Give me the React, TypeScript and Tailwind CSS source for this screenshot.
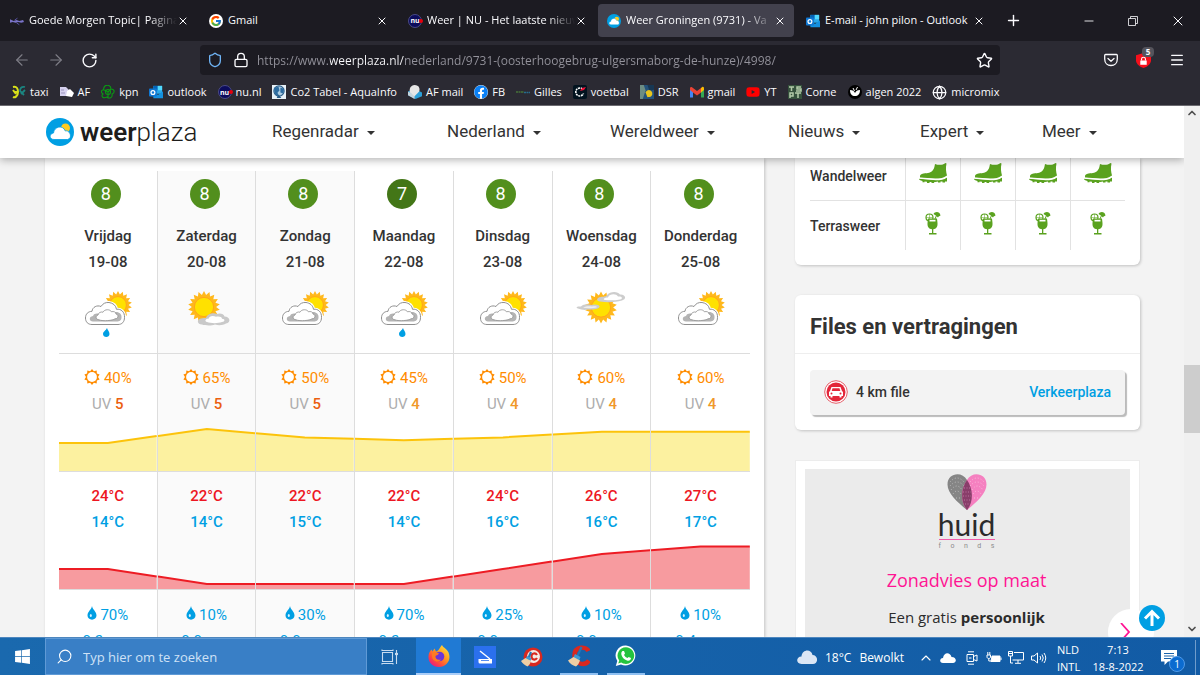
import React from 'react';
import { ArrowLeft, ArrowRight, ChevronDown, ChevronUp, Globe, Lock, Menu, Minus, Plus, RotateCw, Search, Shield, Star, X } from 'lucide-react';
import { FcGoogle } from 'react-icons/fc';
import { FaFacebook, FaWindows, FaYoutube } from 'react-icons/fa';

type Weather = 'cloudy' | 'rain' | 'sunny' | 'veiled';

interface Day {
  name: string;
  date: string;
  score: number;
  weather: Weather;
  sun: number;
  uv: number;
  max: number;
  min: number;
  rain: number;
  amount: string;
}

const DAYS: Day[] = [
  { name: 'Vrijdag', date: '19-08', score: 8, weather: 'rain', sun: 40, uv: 5, max: 24, min: 14, rain: 70, amount: '0.2' },
  { name: 'Zaterdag', date: '20-08', score: 8, weather: 'sunny', sun: 65, uv: 5, max: 22, min: 14, rain: 10, amount: '0.0' },
  { name: 'Zondag', date: '21-08', score: 8, weather: 'cloudy', sun: 50, uv: 5, max: 22, min: 15, rain: 30, amount: '0.0' },
  { name: 'Maandag', date: '22-08', score: 7, weather: 'rain', sun: 45, uv: 4, max: 22, min: 14, rain: 70, amount: '0.2' },
  { name: 'Dinsdag', date: '23-08', score: 8, weather: 'cloudy', sun: 50, uv: 4, max: 24, min: 16, rain: 25, amount: '0.0' },
  { name: 'Woensdag', date: '24-08', score: 8, weather: 'veiled', sun: 60, uv: 4, max: 26, min: 16, rain: 10, amount: '0.0' },
  { name: 'Donderdag', date: '25-08', score: 8, weather: 'cloudy', sun: 60, uv: 4, max: 27, min: 17, rain: 10, amount: '0.4' },
];

const NAV = ['Regenradar', 'Nederland', 'Wereldweer', 'Nieuws', 'Expert', 'Meer'];

const CHART_HEIGHT = 54;
const SUN_HEIGHTS = DAYS.map((d) => 28 + (d.sun - 40) * 0.56);
const TEMP_HEIGHTS = DAYS.map((d) => 5 + (d.max - 22) * 7.5);

const rays = (cx: number, cy: number, outer: number, inner: number, count: number) =>
  Array.from({ length: count * 2 }, (_, i) => {
    const r = i % 2 === 0 ? outer : inner;
    const a = (Math.PI * i) / count - Math.PI / 2;
    return `${(cx + r * Math.cos(a)).toFixed(2)},${(cy + r * Math.sin(a)).toFixed(2)}`;
  }).join(' ');

/* ---------- weather drawings ---------- */

const Sun: React.FC<{ cx: number; cy: number; r: number }> = ({ cx, cy, r }) => (
  <>
    <polygon points={rays(cx, cy, r, r * 0.76, 18)} fill="#ffb81c" />
    <circle cx={cx} cy={cy} r={r * 0.6} fill="#ffe100" stroke="#ff9d1c" strokeWidth="0.8" />
  </>
);

const WeatherIcon: React.FC<{ kind: Weather }> = ({ kind }) => (
  <svg viewBox="-2 0 50 46" className="mx-auto block h-[46px] w-[50px]" aria-hidden="true">
    {(kind === 'cloudy' || kind === 'rain') && (
      <>
        <Sun cx={33} cy={14} r={14} />
        <path d="M7 33.5C3 33.5.5 31 .5 27S3 20.5 7 20.3C7.500 16 12 13.800 16 15.500C18 12.300 20.500 11.300 24 11.500C28 12 31 14.500 31.500 18.300C36 17.600 39.800 21 39.500 26.300C39.500 31 37 33.500 33 33.500Z" fill="#fff" stroke="#fff" strokeWidth="3" />
        <path d="M7 33.5C3 33.5.5 31 .5 27S3 20.5 7 20.3C7.500 16 12 13.800 16 15.500C18 12.300 20.500 11.300 24 11.500C28 12 31 14.500 31.500 18.300C36 17.600 39.800 21 39.500 26.300C39.500 31 37 33.500 33 33.500Z" fill="#fff" stroke="#8f8f8f" strokeWidth="1" />
        <path d="M8 30.500C4 30.500 3.500 25.500 8 25C9 22.500 12 22 14 23L30 21C34 20.500 37 23 36.500 26.500C36.500 29.500 34 30.500 32 30.500Z" fill="#b4b4b4" />
        <path d="M14 28.800C10.500 28.500 10.300 24.800 13 24C13.500 21.500 16 20.500 18 21.200C19.500 18 25 18 26.500 20.800C28.500 20 31 21 31 23C34 23.500 33.500 28 30 27.800C28 29.500 18 30.500 14 28.800Z" fill="#fff" stroke="#8f8f8f" strokeWidth="0.8" />
      </>
    )}
    {kind === 'rain' && <path d="M22 37C22.500 39 24.500 40.500 24.500 43C24.500 47 18 47 18 43C18 40.500 21 39.500 22 37Z" fill="#009fe3" />}
    {kind === 'sunny' && (
      <>
        <Sun cx={20} cy={16} r={16} />
        <path d="M18 33.500C13 33.500 12.500 28.500 17 27.500C19 26.500 21 27 22 27C23 23 29 21 33 23C36 21.500 40 23 40.500 25.500C46 25.500 47.500 31.500 42 32.500C39 34.500 34 34.500 31 33.500C27 35 21 34.500 18 33.500Z" fill="#c9c9c9" />
        <path d="M23 31C20.500 30.500 21 27.500 24.500 27.800C25 25 29 24 32 25.800C35 25 38 26 38 27.800C41.500 28 41 30.800 38 31C34 32.500 27 32.500 23 31Z" fill="#fff" />
      </>
    )}
    {kind === 'veiled' && (
      <>
        <Sun cx={23} cy={16.500} r={16} />
        <path d="M22 10.500C18 10.500 18 6.500 23 6C25 5.500 28 6 29 4C32 0 40 0 42 3.500C47 3 49.500 8 44 9.500C38 11 30 12 22 10.500Z" fill="#cdcdcd" />
        <path d="M27 9C24.500 8.500 26 6.500 30 6.500C31 3 38 2 40 5.500C44 5 45.500 7.500 42 8.500C37 9.500 31 9.500 27 9Z" fill="#fff" />
        <path d="M0 17.500C-3 16.500-1 15 3 15.500C5 13 10 12.500 13 14C17 12.500 22.500 14 21.500 16C20 19 12 18.500 10 18.500C6 19.500 3 18.500 0 17.500Z" fill="#cdcdcd" />
        <path d="M5 16.800C8 14.800 12 15 14 15.500C17 15 19 15.500 19 16.200C15 17.500 9 17.500 5 16.800Z" fill="#eee" />
      </>
    )}
  </svg>
);

const SunOutline = () => (
  <svg viewBox="0 0 16 16" className="mb-0.5 size-4 shrink-0" aria-hidden="true">
    <polygon points={rays(8, 8, 8, 6, 10)} fill="#ff8c00" />
    <circle cx="8" cy="8" r="4.900" fill="#fff" />
  </svg>
);

const Drop = () => (
  <svg viewBox="0 0 10 14" className="mb-1 h-3.5 w-2.5 shrink-0" aria-hidden="true">
    <path d="M5 0C5.500 3.500 9.500 5.500 9.500 9.500C9.500 15 .5 15 .5 9.500C.5 5.500 4.500 3.500 5 0Z" fill="#009fe3" />
    <ellipse cx="3.800" cy="9.500" rx="1" ry="1.600" fill="#d9f2ff" />
  </svg>
);

const Boot = () => (
  <svg viewBox="0 0 28 20" className="mx-auto block h-5 w-7" aria-hidden="true">
    <path d="M16 1C20 2.500 24 2 26.500 0L27.500 .5C26.500 5 27 9 28 12.500C24 15.500 20 15.500 16 15.500L1 14.500C.5 12 2 10.800 4.500 10.500C9 10 12 10 14 7C15.500 5 15.500 3 16 1Z" fill="#5aa21f" />
    <path d="M0 15.800L17 17.300C21 17.300 25 17 28 14.500V18.500L26 18.500V19.500H23.500V18.500L21.500 18.500V19.500H19V18.500L15 19.300V20H12.500V19L10.500 19V20H8V18.800L5.500 18.500V19.300H3.500V18C1 17.500 0 16.800 0 15.800Z" fill="#5aa21f" />
    <path d="M.5 15.200L16.500 16.400C21 16.400 25 16 28 13.600" fill="none" stroke="#fff" strokeWidth=".9" />
  </svg>
);

const Cocktail = () => (
  <svg viewBox="0 0 16 24" className="mx-auto block h-6 w-4" aria-hidden="true">
    <circle cx="4.500" cy="6.500" r="3.500" fill="#fff" stroke="#5aa21f" strokeWidth="1.200" />
    <path d="M4.500 3V10M1 6.500H8" stroke="#5aa21f" strokeWidth=".5" />
    <path d="M8.500 3C10 .5 14.500 0 15.500 4.500C14.500 5 13.500 5.500 13 6.500C11.500 5 10 4 8.500 3Z" fill="#5aa21f" />
    <path d="M11.500 4.500L9.500 9" stroke="#5aa21f" strokeWidth="1" />
    <path d="M3 7.500H12L12.500 12C12.800 16 11 18 8.300 18.300V22H11.500V23.500H4V22H7V18.300C4 18 2.300 16 2.500 12Z" fill="#5aa21f" />
    <path d="M4.500 8.800H10.500V10.500H4.500Z" fill="#fff" />
  </svg>
);

/* ---------- small logos ---------- */

const PlazaLogo: React.FC<{ className: string }> = ({ className }) => (
  <svg viewBox="0 0 28 28" className={className} aria-hidden="true">
    <circle cx="14" cy="14" r="14" fill="#009fe3" />
    <circle cx="19.500" cy="10" r="4.500" fill="#ffcb1f" />
    <path d="M8 21.500C3 21.500 3 15.500 7.500 15C8 8.500 17 6.500 19.300 13C24 11.500 27 20.500 21.500 21.500Z" fill="#fff" stroke="#009fe3" strokeWidth=".8" />
  </svg>
);

const icon = 'size-3.5 shrink-0';

const OutlookLogo = () => (
  <svg viewBox="0 0 16 14" className={icon} aria-hidden="true">
    <path d="M5 0H15V9H5Z" fill="#28a8ea" />
    <path d="M5 0H10V5H5Z" fill="#0364b8" />
    <path d="M10 0H15V5H10Z" fill="#50d9ff" />
    <path d="M5 8L10.500 10L16 6V14H5Z" fill="#1490df" />
    <rect y="3" width="9" height="9" rx="1" fill="#0f78d4" />
    <circle cx="4.500" cy="7.500" r="2.200" fill="none" stroke="#fff" strokeWidth="1.400" />
  </svg>
);

const NuLogo = () => (
  <span className="relative flex size-3.5 shrink-0 items-center justify-center rounded-full border border-[#4a4a86] bg-[#0c0c5c] text-[7px] font-bold leading-none text-white">
    nu
    <span className="absolute -right-0.5 top-1 size-1 rounded-full bg-red-600" />
  </span>
);

const Bookmark: React.FC<{ label: string; children: React.ReactNode }> = ({ label, children }) => (
  <a href="#" className="flex items-center gap-1 whitespace-nowrap">
    {children}
    {label}
  </a>
);

const BOOKMARKS: { label: string; icon: React.ReactNode }[] = [
  {
    label: 'taxi',
    icon: (
      <svg viewBox="0 0 14 14" className={icon}>
        <path d="M1 2C5 1 6 4 6 7C6 11 3 13 1 12M2 7H6M1 5L4 9" stroke="#d8e01a" strokeWidth="2" fill="none" />
        <path d="M13 2C9 1 8 4 8 6L12 10M13 5L9 9" stroke="#1b8581" strokeWidth="1.800" fill="none" />
      </svg>
    ),
  },
  {
    label: 'AF',
    icon: (
      <svg viewBox="0 0 14 14" className={icon}>
        <path d="M0 2H6L9 5V11H0Z" fill="#d5d0ee" />
        <path d="M7 6L10 4L14 8L12 12L6 11Z" fill="#fff" />
        <path d="M1 5H4M1 8H5" stroke="#9b95bd" />
      </svg>
    ),
  },
  {
    label: 'kpn',
    icon: (
      <svg viewBox="0 0 14 14" className={icon} fill="none" stroke="#0a9b13" strokeWidth="1.100">
        <path d="M4 1C6-.5 10 0 10 4C14 4 14 8 11 9C12 13 8 14 6 12C2 14-.5 11 2 9C-1 7 1 4 3 5C2 3 3 2 4 1Z" />
        <circle cx="7" cy="7" r="2.500" />
        <path d="M4 5L7 7L10 4M7 7V12" />
      </svg>
    ),
  },
  { label: 'outlook', icon: <OutlookLogo /> },
  { label: 'nu.nl', icon: <NuLogo /> },
  {
    label: 'Co2 Tabel - AquaInfo',
    icon: (
      <svg viewBox="0 0 15 15" className={icon}>
        <path d="M0 0H15V15H0Z" fill="#e8f1f7" />
        <circle cx="7.500" cy="6.500" r="5.500" fill="#a9cbe2" stroke="#285b87" strokeWidth="1.200" />
        <path d="M2 3L7 2L8 6L6 8L7 13L3 9ZM9 3L13 4L12 9L9 8Z" fill="#2d6ca0" />
        <path d="M5 14L7 10L10 14Z" fill="#285b87" />
      </svg>
    ),
  },
  {
    label: 'AF mail',
    icon: (
      <svg viewBox="0 0 15 15" className={icon}>
        <path d="M0 7L7 4L15 8V12L8 15L0 11Z" fill="#2c9fd8" />
        <path d="M0 7L7 11V15L0 11Z" fill="#c7d5dd" />
        <path d="M7 0C12 0 13 4 12 7L7 12L2 8C1 4 3 0 7 0Z" fill="#e6e6e6" />
      </svg>
    ),
  },
  { label: 'FB', icon: <FaFacebook className="size-3.5 shrink-0 rounded-full bg-white text-[#0a80f5]" /> },
  {
    label: 'Gilles',
    icon: (
      <svg viewBox="0 0 14 14" className={icon}>
        <path d="M0 7H8" stroke="#47733a" strokeWidth="1.500" strokeDasharray="2 .5" />
        <path d="M8 7.500H14" stroke="#276c8c" strokeWidth="1.500" strokeDasharray="2 .5" />
      </svg>
    ),
  },
  {
    label: 'voetbal',
    icon: (
      <svg viewBox="0 0 14 14" className={icon}>
        <rect width="14" height="14" rx="2" fill="#02131f" />
        <path d="M9.500 4A4 4 0 1 0 10.500 8.500" fill="none" stroke="#fff" strokeWidth="1.600" strokeDasharray="2 .7" />
        <path d="M7 6L9 3L13 2L11 5Z" fill="#f01438" />
      </svg>
    ),
  },
  {
    label: 'DSR',
    icon: (
      <svg viewBox="0 0 15 15" className={icon}>
        <path d="M0 0H15V15H0Z" fill="#24527a" />
        <path d="M0 0H4L6 6L3 15H0Z" fill="#6c8d83" />
        <path d="M8 0H15V5L10 6Z" fill="#173753" />
        <path d="M6 8C8 4 12 5 13 8C14 12 11 13 8 13Z" fill="#e8c51d" />
      </svg>
    ),
  },
  {
    label: 'gmail',
    icon: (
      <svg viewBox="0 0 14 11" className={icon}>
        <path d="M0 2V11H3V4.500Z" fill="#4285f4" />
        <path d="M14 2V11H11V4.500Z" fill="#34a853" />
        <path d="M11 1.500L12.500 .3C13.500 0 14 .8 14 2V3.500L11 6Z" fill="#fbbc04" />
        <path d="M0 3.500V2C0 .5 1 0 2 .8L7 4.500L11 1.500V6L7 9L3 6Z" fill="#ea4335" />
      </svg>
    ),
  },
  { label: 'YT', icon: <FaYoutube className="size-3.5 shrink-0 text-[#ff0000]" /> },
  {
    label: 'Corne',
    icon: (
      <svg viewBox="0 0 14 14" className={icon}>
        <path d="M0 0H14V14H0Z" fill="#35513c" />
        <path d="M1 2H6M3.500 2V6M13 2H9V4H13V6H8M2 13V8H5V11H2M7 8H13M10 8V13" stroke="#b4cba9" strokeWidth="1.500" fill="none" />
      </svg>
    ),
  },
  {
    label: 'algen 2022',
    icon: (
      <svg viewBox="0 0 14 14" className={icon}>
        <circle cx="7" cy="7" r="7" fill="#000" />
        <path d="M2 5C5 5 6 6 7 8C8 6 9 5 12 5C12 9 10 11 7 11C4 11 2 9 2 5Z" fill="#fff" />
        <path d="M5 3L6.500 6M9.500 2L8 5" stroke="#fff" />
      </svg>
    ),
  },
  { label: 'micromix', icon: <Globe size={15} strokeWidth={2} className="shrink-0" /> },
];

const TABS: { title: string; icon: React.ReactNode; active?: boolean; long?: boolean }[] = [
  {
    title: 'Goede Morgen Topic| Pagina',
    long: true,
    icon: (
      <svg viewBox="0 0 15 14" className={icon}>
        <path d="M0 5L4 7L7 6L10 7L14 6L15 8L12 9L9 8L6 9L3 8L0 9Z" fill="#7973c8" />
        <path d="M5 6L8 4M7 9L10 11" stroke="#5b55a8" />
      </svg>
    ),
  },
  { title: 'Gmail', icon: <FcGoogle className="size-3.5 shrink-0 rounded-full bg-white p-px" /> },
  { title: 'Weer | NU - Het laatste nieuw', icon: <NuLogo />, long: true },
  { title: 'Weer Groningen (9731) - Va', icon: <PlazaLogo className={icon} />, active: true, long: true },
  { title: 'E-mail - john pilon - Outlook', icon: <OutlookLogo /> },
];

/* ---------- browser chrome ---------- */

const BrowserChrome = () => (
  <div className="shrink-0 border-b border-[#6b6a70] bg-[#2b2a33] font-['Open_Sans',sans-serif] text-[#fbfbfe]">
    <div className="flex h-[41px] items-center bg-[#1c1b22] pl-px text-[11px]">
      <div className="flex gap-[3px]">
        {TABS.map((tab) => (
          <div key={tab.title} className={`flex h-[33px] w-[196px] items-center rounded pl-[9px] pr-2 ${tab.active ? 'bg-[#42414d]' : ''}`}>
            {tab.icon}
            <a
              href="#"
              className={`ml-[5px] min-w-0 flex-1 whitespace-nowrap ${tab.long ? '[mask-image:linear-gradient(90deg,#000_calc(100%-28px),transparent)]' : ''}`}
            >
              {tab.title}
            </a>
            <button aria-label="Tabblad sluiten" className="shrink-0"><X size={12} strokeWidth={2} /></button>
          </div>
        ))}
      </div>
      <button aria-label="Nieuw tabblad" className="ml-3"><Plus size={17} strokeWidth={2} /></button>
      <div className="ml-auto flex items-center gap-8 pr-3.5">
        <button aria-label="Minimaliseren"><Minus size={14} strokeWidth={1.500} /></button>
        <button aria-label="Herstellen">
          <svg viewBox="0 0 10 10" className="size-2.5" fill="none" stroke="currentColor" strokeWidth=".8">
            <path d="M.5 2.500H7.500V9.500H.5ZM2.500 2.500V.5H9.500V7.500H7.500" />
          </svg>
        </button>
        <button aria-label="Sluiten"><X size={16} strokeWidth={1.500} /></button>
      </div>
    </div>

    <div className="flex h-[38px] items-center">
      <div className="flex w-[200px] items-center gap-4 pl-[13px]">
        <button aria-label="Terug" className="text-[#7f7e87]"><ArrowLeft size={18} strokeWidth={1.500} /></button>
        <button aria-label="Vooruit" className="text-[#7f7e87]"><ArrowRight size={18} strokeWidth={1.500} /></button>
        <button aria-label="Vernieuwen"><RotateCw size={17} strokeWidth={2} /></button>
      </div>
      <div className="flex h-[30px] flex-1 items-center rounded bg-[#1c1b22] px-[7px]">
        <Shield size={16} strokeWidth={2} className="text-[#6fb4f5]" />
        <Lock size={16} strokeWidth={2} className="ml-2.5" />
        <input
          aria-label="Adres"
          className="ml-2 flex-1 bg-[linear-gradient(90deg,#94939c_73px,#fbfbfe_73px,#fbfbfe_147px,#94939c_147px)] bg-clip-text pt-0.5 text-xs text-transparent outline-none"
          defaultValue="https://www.weerplaza.nl/nederland/9731-(oosterhoogebrug-ulgersmaborg-de-hunze)/4998/"
        />
        <button aria-label="Bladwijzer maken"><Star size={17} strokeWidth={2} /></button>
      </div>
      <div className="flex w-[200px] items-center justify-end gap-[18px] pr-[15px]">
        <button aria-label="Pocket">
          <svg viewBox="0 0 14 14" className="size-3.5" fill="none" stroke="currentColor" strokeWidth="1.300">
            <path d="M1.500 1.500H12.500Q13.300 1.500 13.300 2.500V6C13.300 10 10.500 12.500 7 12.500S.7 10 .7 6V2.500Q.7 1.500 1.500 1.500Z" />
            <path d="M4 5.500L7 8.300L10 5.500" strokeLinecap="round" strokeLinejoin="round" />
          </svg>
        </button>
        <button aria-label="uBlock" className="relative">
          <svg viewBox="0 0 14 14" className="size-[15px]">
            <path d="M7 0L14 2V7C14 10.500 10 13 7 14C4 13 0 10.500 0 7V2Z" fill="#f5101c" />
            <path d="M4 7H10V11H4Z" fill="#fff" />
            <path d="M5.200 7V5.500C5.200 3.500 8.800 3.500 8.800 5.500V7" fill="none" stroke="#fff" />
          </svg>
          <span className="absolute -top-1.5 left-1.5 w-3 rounded-sm bg-[#55545c] text-center text-[8px] font-bold leading-[10px]">5</span>
        </button>
        <button aria-label="Menu"><Menu size={16} strokeWidth={2} /></button>
      </div>
    </div>

    <nav className="flex h-[26px] items-center gap-[11px] overflow-hidden pl-3 text-[11px]">
      {BOOKMARKS.map((b) => (
        <Bookmark key={b.label} label={b.label}>{b.icon}</Bookmark>
      ))}
    </nav>
  </div>
);

/* ---------- page ---------- */

const SiteHeader = () => (
  <header className="relative z-10 flex h-[52px] shrink-0 items-center bg-white pl-[46px] shadow-[0_2px_8px_rgba(0,0,0,0.3)]">
    <a href="#" className="flex w-[226px] items-center gap-1.5 text-[26px] leading-8 text-[#1d1d1b]">
      <PlazaLogo className="size-7" />
      <span className="font-light"><span className="font-semibold">weer</span>plaza</span>
    </a>
    <nav className="grid flex-1 grid-cols-[175fr_163fr_178fr_132fr_122fr_142fr] text-[17px] text-[#333]">
      {NAV.map((item) => (
        <button key={item} className="flex items-center gap-2 whitespace-nowrap text-left">
          {item}
          <svg viewBox="0 0 8 4" className="mt-0.5 h-1 w-2"><path d="M0 0H8L4 4Z" fill="#333" /></svg>
        </button>
      ))}
    </nav>
  </header>
);

const ChartCell: React.FC<{ values: number[]; index: number; line: string; fill: string }> = ({ values, index, line, fill }) => {
  const y = (v: number) => CHART_HEIGHT - v;
  const mid = values[index];
  const left = ((values[index - 1] ?? mid) + mid) / 2;
  const right = ((values[index + 1] ?? mid) + mid) / 2;
  const top = `0,${y(left)} 50,${y(mid)} 100,${y(right)}`;
  return (
    <svg viewBox="0 0 100 54" preserveAspectRatio="none" className="block h-[54px] w-full" aria-hidden="true">
      <polygon points={`${top} 100,54 0,54`} fill={fill} />
      <polyline points={top} fill="none" stroke={line} strokeWidth="2" vectorEffect="non-scaling-stroke" />
    </svg>
  );
};

const Forecast = () => {
  const cell = (i: number) =>
    `border-b border-b-[#ddd] p-0 align-top font-normal ${i < 6 ? 'border-r border-r-[#ddd]' : ''} ${i === 1 || i === 2 ? 'bg-[#fafafa]' : ''}`;

  return (
    <section className="min-w-0 flex-1 bg-white px-3.5 pt-[13px] shadow-[1px_1px_3px_rgba(0,0,0,0.2)]">
      <table className="w-full table-fixed border-separate border-spacing-0 text-center text-[15px] leading-[26px]">
        <thead>
          <tr>
            {DAYS.map((d, i) => (
              <th key={d.name} scope="col" className={cell(i)}>
                <div className="pb-4 pt-2 text-[#333]">
                  <div className="flex justify-center pr-1">
                    <span className={`flex size-[30px] items-center justify-center rounded-full text-lg text-white ${d.score === 7 ? 'bg-[#437617]' : 'bg-[#528f1d]'}`}>
                      {d.score}
                    </span>
                  </div>
                  <div className="mb-4 mt-3.5 font-medium">
                    {d.name}<br />{d.date}
                  </div>
                  <WeatherIcon kind={d.weather} />
                </div>
              </th>
            ))}
          </tr>
        </thead>
        <tbody>
          <tr>
            {DAYS.map((d, i) => (
              <td key={d.name} className={cell(i)}>
                <div className="flex items-center justify-center gap-1 pt-[11px] text-[#ff8c00]"><SunOutline />{d.sun}%</div>
                <div className="text-[#adadad]">UV <span className={d.uv === 5 ? 'font-medium text-[#eb5f10]' : 'font-medium text-[#f0982a]'}>{d.uv}</span></div>
                <ChartCell values={SUN_HEIGHTS} index={i} line="#fcc30b" fill="#fcf1a0" />
              </td>
            ))}
          </tr>
          <tr>
            {DAYS.map((d, i) => (
              <td key={d.name} className={cell(i)}>
                <div className="pt-[11px] font-medium text-[#ed1622]">{d.max}°C</div>
                <div className="font-medium text-[#009fe3]">{d.min}°C</div>
                <ChartCell values={TEMP_HEIGHTS} index={i} line="#ed1c24" fill="#f79b9f" />
              </td>
            ))}
          </tr>
          <tr>
            {DAYS.map((d, i) => (
              <td key={d.name} className={`${cell(i)} text-[#009fe3]`}>
                <div className="flex items-center justify-center gap-[3px] pt-3"><Drop />{d.rain}%</div>
                <div>{d.amount} mm</div>
              </td>
            ))}
          </tr>
        </tbody>
      </table>
    </section>
  );
};

const Sidebar = () => (
  <aside className="w-[345px] shrink-0 text-sm font-medium text-[#333]">
    <section className="rounded-b-md bg-white px-[15px] pb-[15px] shadow-[1px_1px_3px_rgba(0,0,0,0.2)]">
      <table className="w-full table-fixed border-separate border-spacing-0">
        <colgroup>
          <col className="w-[95px]" />
        </colgroup>
        <tbody>
          <tr className="h-[43px]">
            <th scope="row" className="border-b border-[#e2e2e2] p-0 pb-1.5 text-left font-medium">Wandelweer</th>
            {[0, 1, 2, 3].map((n) => <td key={n} className="border-b border-l border-[#e2e2e2] p-0 pb-3"><Boot /></td>)}
          </tr>
          <tr className="h-[49px]">
            <th scope="row" className="p-0 text-left font-medium">Terrasweer</th>
            {[0, 1, 2, 3].map((n) => <td key={n} className="border-l border-[#e2e2e2] p-0 pb-1.5"><Cocktail /></td>)}
          </tr>
        </tbody>
      </table>
    </section>

    <section className="mt-[30px] rounded-md bg-white pb-[15px] shadow-[1px_1px_3px_rgba(0,0,0,0.2)]">
      <h2 className="border-b border-[#eee] px-[15px] pb-3 pt-[18px] text-[22px] font-bold leading-7">Files en vertragingen</h2>
      <div className="mx-[15px] mt-4 flex h-[45px] items-center rounded bg-[#f3f3f3] px-3.5 pb-0.5 shadow-[2px_2px_1px_#bbb]">
        <svg viewBox="0 0 24 24" className="mr-2 size-6" aria-hidden="true">
          <circle cx="12" cy="12" r="11.300" fill="#fff" stroke="#e6606b" />
          <circle cx="12" cy="12" r="9.500" fill="#e3273a" />
          <path d="M7.500 7H16.500L18 11L19 12V16H17.500V17.500H15.500V16H8.500V17.500H6.500V16H5V12L6 11Z" fill="#fff" />
          <path d="M8.500 8.300H15.500L16.300 11H7.700Z" fill="#e3273a" />
          <circle cx="7.500" cy="13.500" r="1" fill="#e3273a" />
          <circle cx="16.500" cy="13.500" r="1" fill="#e3273a" />
        </svg>
        4 km file
        <a href="#" className="ml-auto text-[#009fe3]">Verkeerplaza</a>
      </div>
    </section>

    <section className="mt-[30px] border border-[#ececec] bg-white px-[9px] pt-2">
      <div className="relative flex h-60 flex-col items-center bg-[#ebebeb] pr-0.5 pt-[5px] font-normal text-[#2b2b2b]">
        <svg viewBox="0 0 40 36" className="h-9 w-10" aria-hidden="true">
          <path d="M20 36C10 28 .5 19 .5 10.500C.5-1 15-3 20 6C26 14 27 28 20 36Z" fill="#858585" />
          <path d="M20 36C30 28 39.500 19 39.500 10.500C39.500-1 25-3 20 6C14 14 13 28 20 36Z" fill="#f580c0" />
          <path d="M20 6C14 14 13 28 20 36C27 28 26 14 20 6Z" fill="#893e6a" />
          <path d="M3 8Q10 0 17 8M3 12Q10 4 17 12M4 16Q10 8 15 16M6 20Q10 14 14 20M9 24L13 24" fill="none" stroke="#c9c9c9" strokeWidth=".8" strokeDasharray="1 2" />
          <path d="M23 8Q30 0 37 8M23 12Q30 4 37 12M25 16Q30 8 36 16M26 20Q30 14 34 20M27 24H31" fill="none" stroke="#fbc8e2" strokeWidth=".8" strokeDasharray="1 2" />
          <path d="M17 14H23M16 18H24M16 22H24M17 26H23M18 30H22" fill="none" stroke="#c684ac" strokeWidth=".8" strokeDasharray="1 1.500" />
        </svg>
        <div className="flex w-14 flex-col items-center">
          <span className="font-[Lato,sans-serif] text-[30px] leading-7">huid</span>
          <span className="mt-px flex w-full justify-between border-t border-[#f25cab] text-[7px] leading-3 text-[#8b8b8b]">
            {['f', 'o', 'n', 'd', 's'].map((c) => <span key={c}>{c}</span>)}
          </span>
        </div>
        <a href="#" className="mt-3.5 font-['Open_Sans',sans-serif] text-lg leading-7 text-[#ff1493]">Zonadvies op maat</a>
        <p className="mt-[11px] font-['Open_Sans',sans-serif] text-[15px] leading-6">Een gratis <b>persoonlijk</b></p>
        <button aria-label="Volgende" className="absolute -right-6 top-[140px] flex size-[46px] items-center justify-center rounded-full bg-white">
          <svg viewBox="0 0 12 18" className="mr-3 h-[18px] w-3" fill="none" stroke="#ff1493" strokeWidth="1.800"><path d="M2 0L10 9L2 18" /></svg>
        </button>
      </div>
    </section>
  </aside>
);

const ScrollBar = () => (
  <div className="flex w-4 shrink-0 flex-col items-center bg-[#f0f0f0] text-[#505050]">
    <ChevronUp size={12} strokeWidth={3.500} className="mb-0.5 mt-px shrink-0" />
    <div className="flex-[244]" />
    <div className="w-full flex-[69] bg-[#cdcdcd]" />
    <div className="flex-[190]" />
    <ChevronDown size={12} strokeWidth={3.500} className="mb-0.5 shrink-0" />
  </div>
);

/* ---------- taskbar ---------- */

const CCleaner: React.FC<{ plain?: boolean }> = ({ plain }) => (
  <svg viewBox="0 0 22 22" className="size-[22px]" aria-hidden="true">
    {!plain && <circle cx="12" cy="11" r="9.500" fill="#d9281f" />}
    {!plain && <circle cx="12.500" cy="10.500" r="6.500" fill="#f5ece7" />}
    <path
      d={plain ? 'M20.500 6C18 1 6.500 1 6.500 10.500S17.500 21 21 15.500' : 'M16 9C14.500 6.500 10.500 7 10.500 10.500S14.500 14.500 16 12'}
      fill="none"
      stroke="#d9281f"
      strokeWidth={plain ? 4.500 : 2.200}
    />
    <path d={plain ? 'M13.500 2L9.500 11' : 'M10 6L7.500 12'} stroke="#2277b8" strokeWidth="2.200" />
    <path d={plain ? 'M7 9L12.500 12L11 16L5 13Z' : 'M6 10L10.500 12L9.500 15L4.500 13Z'} fill="#3b9ad6" />
    <path d={plain ? 'M5.500 12L12 15.500C11 18 10 20 8 21.500C4.500 20.500 1.500 18.500 0 15.500Z' : 'M4.500 12L10 15C9.500 17 8.500 19 6.500 20.500C4 19.500 1.500 17.500 0 15Z'} fill="#efcfa4" />
  </svg>
);

const FirefoxLogo = () => (
  <svg viewBox="0 0 22 22" className="size-[22px]" aria-hidden="true">
    <defs>
      <linearGradient id="fx" x1="1" y1="0" x2="0.2" y2="1">
        <stop offset="0" stopColor="#fff04a" />
        <stop offset="0.45" stopColor="#ff9a1f" />
        <stop offset="0.75" stopColor="#ff4a3d" />
        <stop offset="1" stopColor="#e3168b" />
      </linearGradient>
    </defs>
    <path d="M14 0C15 3 20 4 21 9C23 16 18 22 11 22C4 22 0 17 .5 11C.7 8 2 6 3.500 4.500L4.500 6.500L6.500 3.500L8 6.500C11 6 12 2 14 0Z" fill="url(#fx)" />
    <circle cx="11.500" cy="11.500" r="4.800" fill="#6c35d8" />
    <path d="M4 8C7 6.500 9 7.500 11 8.500C10 10.500 8 10 7.500 11C7 14 10 15.500 13 14.500C10 18.500 4 16 4 11Z" fill="#ff7a22" />
  </svg>
);

const Taskbar = () => (
  <footer className="flex h-[38px] shrink-0 items-stretch border-t border-[#4d86be] bg-linear-to-r from-[#1a69ae] to-[#125ba5] font-['Open_Sans',sans-serif] text-white">
    <button aria-label="Start" className="flex w-[45px] items-center justify-center"><FaWindows size={17} /></button>
    <label className="flex w-[322px] items-center gap-2.5 border border-[#5f9ad6] bg-[#397fc6] px-2.5">
      <Search size={17} strokeWidth={1.500} className="-scale-x-100" />
      <input aria-label="Zoeken" placeholder="Typ hier om te zoeken" className="min-w-0 flex-1 pt-0.5 text-[13px] outline-none placeholder:text-[#cfe2f6]" />
    </label>
    <button aria-label="Taakweergave" className="flex w-[49px] items-center justify-center pr-1">
      <svg viewBox="0 0 18 16" className="h-4 w-[18px]" fill="none" stroke="#c7dbef" strokeWidth="1.100">
        <path d="M1.500 3.500H11.500V12.500H1.500ZM1 .5V1.500H12V.5M1 15.500V14.500H12V15.500M15.500 1V15" />
        <path d="M14 5H17" strokeWidth="2.200" />
      </svg>
    </button>
    <button aria-label="Firefox" className="flex w-[45px] items-center justify-center border-b-2 border-[#a9cdf8] bg-[#207ad4]"><FirefoxLogo /></button>
    <button aria-label="Scannen" className="flex w-12 items-center justify-center">
      <svg viewBox="0 0 22 22" className="size-[22px]">
        <path d="M0 0H22V22H0Z" fill="#2b70ee" />
        <path d="M6 5L16 13" stroke="#fff" strokeWidth="1.500" />
        <path d="M4.500 13H18V17.500H6Q4.500 17.500 4.500 16Z" fill="#fff" />
        <path d="M7 14.500H15" stroke="#2b70ee" strokeWidth=".8" />
      </svg>
    </button>
    <button aria-label="CCleaner Browser" className="flex w-[46px] items-center justify-center"><CCleaner /></button>
    <span className="flex gap-[9px] pl-[5px]">
      <button aria-label="CCleaner" className="flex w-[38px] items-center justify-center border-b-2 border-[#8fc0f2]"><CCleaner plain /></button>
      <button aria-label="WhatsApp" className="flex w-[38px] items-center justify-center border-b-2 border-[#8fc0f2]">
        <svg viewBox="0 0 22 22" className="size-[22px]">
          <path d="M11 .5A10 10 0 1 1 6 19.500L.8 21L2.300 16A10 10 0 0 1 11 .5Z" fill="#fff" />
          <path d="M11 2.300A8.300 8.300 0 1 1 6.300 17.500L3.200 18.500L4.200 15.500A8.300 8.300 0 0 1 11 2.300Z" fill="#25c33f" />
          <path d="M7.500 6L9 6L10 8.500L9 10C10 11.500 11 12.500 12.500 13L13.700 12L16 13C15.800 15.500 14 16 12 15.500C9 14.500 7 12 6.500 10C6 8 6.500 6.800 7.500 6Z" fill="#fff" />
        </svg>
      </button>
    </span>
    <div className="ml-auto flex items-center pt-0.5 text-xs">
      <svg viewBox="0 0 20 14" className="mb-0.5 mr-2 h-3.5 w-5"><path d="M4.500 14C-1.500 14-1 6.500 4.500 6.500C5-1 14.500-1.500 15.500 5C21.500 5 21.500 14 16 14Z" fill="#dbe6f5" /></svg>
      <span className="mr-3.5 flex gap-2"><span>18°C</span><span>Bewolkt</span></span>
      <ChevronUp size={16} strokeWidth={1.700} className="mr-1.5" />
      <svg viewBox="0 0 16 10" className="mr-2.5 h-2.5 w-4"><path d="M3 10C-1 10-.5 5 3 5C4-1 10-1 11.500 4C17 4 17 10 13 10Z" fill="#fff" /></svg>
      <svg viewBox="0 0 12 14" className="mr-2 h-3.5 w-3" fill="none" stroke="currentColor">
        <path d="M2 .8H8M2 13.200H8M1 3.500H7.500V10.500H1ZM7.500 5.500L11 4V10L7.500 8.500M3 7H5.500" />
      </svg>
      <svg viewBox="0 0 16 12" className="mr-1.5 h-3 w-4" fill="none" stroke="currentColor">
        <path d="M6 4H14V9.500H5Z" fill="currentColor" />
        <path d="M15 5.500V8M1 3V5C1 7 4.500 7 4.500 5V3ZM1.800 0V3M3.800 0V3M2.800 6.500V9H5" />
      </svg>
      <svg viewBox="0 0 16 13" className="mr-[7px] h-[13px] w-4" fill="none" stroke="currentColor">
        <path d="M6 1.500H15.500V9H4.500M10 9V12M7 12.300H13M.5 .5H4.500V5H.5ZM2.500 5V12H5M1 2.500H4" />
      </svg>
      <svg viewBox="0 0 16 12" className="mr-2.5 h-3 w-4" fill="none" stroke="currentColor">
        <path d="M.5 4H3L6.500 1V11L3 8H.5ZM9 4Q10.500 6 9 8M11 2.500Q13.500 6 11 9.500M13 1Q16.500 6 13 11" />
      </svg>
      <div className="w-[22px] text-[11px] leading-[17px]">NLD<br />INTL</div>
      <div className="ml-3 w-[54px] whitespace-nowrap text-center text-[11px] leading-[17px]">7:13<br />18-8-2022</div>
      <button aria-label="Meldingen" className="relative ml-4 mr-[18px]">
        <svg viewBox="0 0 16 16" className="size-4">
          <path d="M0 0H16V11.500H7L3.500 15V11.500H0Z" fill="#fff" />
          <path d="M3 3.500H13M3 6H13M3 8.500H10" stroke="#1a63aa" />
        </svg>
        <span className="absolute left-2 top-1.5 size-4 rounded-full border border-[#4f9ae8] bg-[#0b6bd0] text-center text-[10px] leading-[14px]">1</span>
      </button>
      <span className="mr-1 h-full w-px bg-[#6f9ccb]" />
    </div>
  </footer>
);

export default function App() {
  return (
    <div className="flex h-screen flex-col overflow-hidden bg-[#f3f3f3] font-[Roboto,sans-serif]">
      <BrowserChrome />
      <div className="flex min-h-0 flex-1">
        <div className="relative flex min-w-0 flex-1 flex-col overflow-hidden">
          <SiteHeader />
          <main className="flex min-h-0 flex-1 gap-[31px] pl-[45px] pr-11">
            <Forecast />
            <Sidebar />
          </main>
          <button aria-label="Naar boven" className="absolute bottom-[6px] right-[19px] z-10 flex size-[26px] items-center justify-center rounded-full bg-[#009fe3]">
            <svg viewBox="0 0 18 18" className="size-[18px]" fill="none" stroke="#fff" strokeWidth="3"><path d="M9 17V3M2 9.500L9 2.500L16 9.500" /></svg>
          </button>
        </div>
        <ScrollBar />
      </div>
      <Taskbar />
    </div>
  );
}
